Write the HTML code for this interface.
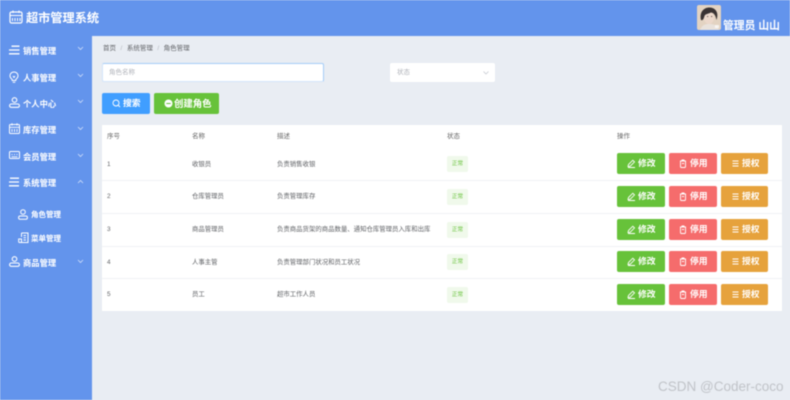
<!DOCTYPE html>
<html lang="zh-CN">
<head>
<meta charset="utf-8">
<title>超市管理系统</title>
<style>
*{box-sizing:border-box}
html,body{margin:0;padding:0}
body{width:790px;height:400px;overflow:hidden;position:relative;background:#e9edf3;font-family:"Liberation Sans","Noto Sans CJK SC",sans-serif;}
#wrap{position:absolute;left:0;top:0;width:790px;height:400px;overflow:hidden;filter:blur(.4px)}
.a{position:absolute;white-space:nowrap}
#hd{left:0;top:0;width:790px;height:36px;background:#6394ec}
#sd{left:0;top:36px;width:92px;height:364px;background:#6394ec}
.m{color:#fff;font-size:8.3px;font-weight:bold;line-height:12px}
.sub{font-size:7.5px}
.sv{position:absolute;fill:none;stroke:#fff;stroke-width:1.2}
.c{stroke-width:.8;opacity:.7}
.t{color:#606266;font-size:6.4px;line-height:10px}
.h{font-size:6.5px;color:#666}
.b{position:absolute;height:21px;border-radius:2px;color:#fff;font-size:8.8px;font-weight:bold;line-height:21px}
.b span{position:absolute;top:0}
.b svg{position:absolute;fill:none;stroke:#fff;stroke-width:.9}
.g{background:#67c23a}.r{background:#f56c6c}.o{background:#e6a23c}
.tag{position:absolute;left:447px;width:21px;height:16px;background:#f0f9eb;border-radius:2px;color:#67c23a;font-size:5.6px;line-height:16px;text-align:center}
.ln{position:absolute;left:102px;width:680px;height:1px;background:#f0f2f5}
</style>
</head>
<body>
<div id="wrap">
<div class="a" id="hd"></div>
<div class="a" id="sd"></div>

<svg class="sv" style="left:9px;top:10px" width="14" height="14" viewBox="0 0 14 14"><rect x="1" y="2" width="12" height="11" rx="1.5"/><path d="M1 5.500H13M4 .5V3M10 .5V3M3.500 8V11M6 8V11M8.500 8V11M11 8V11" stroke-width="1"/></svg>
<div class="a" style="left:26px;top:10px;color:#fff;font-size:12.2px;font-weight:bold;line-height:16px">超市管理系统</div>

<!-- avatar -->
<svg class="a" style="left:697px;top:5px;border-radius:2px" width="24" height="25" viewBox="0 0 24 25">
<rect width="24" height="25" fill="#e3d3c2"/>
<path d="M3 25C5 20 8 19 12 19C17 19 20 20 22 25Z" fill="#e9e2dc"/>
<ellipse cx="12" cy="13" rx="5" ry="6" fill="#ecd8cb"/>
<path d="M4 15C2 6 8 2 13 2.500C19 3 22 8 19.500 15C18.500 10 17 8 14 7.500C11 9 8 9 7.500 11C7 13 6 16 4 15Z" fill="#3a3333"/>
<path d="M10 11.500h1.200M14 11.500h1.200" stroke="#433" stroke-width=".8"/>
<rect x="18" y="20" width="4" height="3" fill="#fff" opacity=".7"/>
</svg>
<div class="a" style="left:723px;top:20px;color:#fff;font-size:10.800px;font-weight:bold;line-height:13px">管理员 山山</div>

<!-- sidebar -->
<svg class="sv" style="left:9px;top:45px" width="11" height="10" viewBox="0 0 11 10"><path d="M2.500 1.200H10.500M0 5H10.500M0 8.800H10.500" stroke-width="1.300"/></svg>
<div class="a m" style="left:23px;top:45px">销售管理</div>
<svg class="sv c" style="left:77px;top:46px" width="7" height="5" viewBox="0 0 7 5"><path d="M1 1L3.500 3.500L6 1"/></svg>

<svg class="sv" style="left:9px;top:71px;stroke-width:1" width="10" height="12" viewBox="0 0 10 12"><path d="M3.200 8.500C2 7.500 1 6.500 1 4.800C1 2.500 2.800 1 5 1C7.200 1 9 2.500 9 4.800C9 6.500 8 7.500 6.800 8.500V9.500H3.200ZM3.700 11.300H6.300M4 5L5 6.500L6 5"/></svg>
<div class="a m" style="left:23px;top:72px">人事管理</div>
<svg class="sv c" style="left:77px;top:73px" width="7" height="5" viewBox="0 0 7 5"><path d="M1 1L3.500 3.500L6 1"/></svg>

<svg class="sv" style="left:9px;top:97px;stroke-width:1.100" width="11" height="11" viewBox="0 0 11 11"><circle cx="5.500" cy="3" r="2.300"/><rect x=".6" y="7" width="9.800" height="3.300" rx="1.600"/></svg>
<div class="a m" style="left:23px;top:98px">个人中心</div>
<svg class="sv c" style="left:77px;top:99px" width="7" height="5" viewBox="0 0 7 5"><path d="M1 1L3.500 3.500L6 1"/></svg>

<svg class="sv" style="left:9px;top:123px;stroke-width:1" width="11" height="11" viewBox="0 0 11 11"><rect x=".5" y="1.500" width="10" height="9" rx="1"/><path d="M.5 4.300H10.500M3 .3V2.500M8 .3V2.500M3 6V9M5.500 6V9M8 6V9" stroke-width=".9"/></svg>
<div class="a m" style="left:23px;top:124px">库存管理</div>
<svg class="sv c" style="left:77px;top:126px" width="7" height="5" viewBox="0 0 7 5"><path d="M1 1L3.500 3.500L6 1"/></svg>

<svg class="sv" style="left:9px;top:151px;stroke-width:1" width="11" height="9" viewBox="0 0 11 9"><rect x=".5" y=".5" width="10" height="7" rx="1"/><path d="M2.500 3.500H3.500M5 3.500H6M7.500 3.500H8.500M2.500 5.800H8.500" stroke-width=".9"/></svg>
<div class="a m" style="left:23px;top:151px">会员管理</div>
<svg class="sv c" style="left:77px;top:153px" width="7" height="5" viewBox="0 0 7 5"><path d="M1 1L3.500 3.500L6 1"/></svg>

<svg class="sv" style="left:9px;top:177px" width="11" height="10" viewBox="0 0 11 10"><path d="M1 1.200H10M0 5H10M0 8.800H10" stroke-width="1.300"/></svg>
<div class="a m" style="left:23px;top:177px">系统管理</div>
<svg class="sv c" style="left:77px;top:179px" width="7" height="5" viewBox="0 0 7 5"><path d="M1 4L3.500 1.500L6 4"/></svg>

<svg class="sv" style="left:18px;top:209px;stroke-width:1" width="10" height="11" viewBox="0 0 10 11"><circle cx="5" cy="3" r="2.300"/><rect x=".6" y="7" width="8.800" height="3.200" rx="1.500"/></svg>
<div class="a m sub" style="left:31px;top:209px">角色管理</div>

<svg class="sv" style="left:18px;top:232px;stroke-width:1" width="11" height="12" viewBox="0 0 11 12"><path d="M3.500 1H10V10.500H2.500M3.500 1V5M5.500 3.500H8M5.500 5.800H8M5.500 8H8M.7 7H3.500V10.500H1.500C1 10.500 .7 10.200 .7 9.500Z"/></svg>
<div class="a m sub" style="left:31px;top:233px">菜单管理</div>

<svg class="sv" style="left:9px;top:256px;stroke-width:1.100" width="11" height="11" viewBox="0 0 11 11"><circle cx="5.500" cy="3" r="2.300"/><rect x=".6" y="7" width="9.800" height="3.300" rx="1.600"/></svg>
<div class="a m" style="left:23px;top:257px">商品管理</div>
<svg class="sv c" style="left:77px;top:259px" width="7" height="5" viewBox="0 0 7 5"><path d="M1 1L3.500 3.500L6 1"/></svg>

<!-- breadcrumb -->
<div class="a" style="left:103px;top:44px;font-size:6.500px;line-height:10px;color:#606266">首页<span style="color:#b5b9c0;margin:0 4.500px">/</span>系统管理<span style="color:#b5b9c0;margin:0 4.500px">/</span>角色管理</div>

<!-- form -->
<div class="a" style="left:102px;top:63px;width:222px;height:19px;background:#fff;border:1px solid #a5cdf8;border-left-color:#d3e5fa;border-bottom-color:#d3e5fa;border-radius:2px"></div>
<div class="a" style="left:109px;top:68px;font-size:6.500px;line-height:10px;color:#b0b3ba">角色名称</div>
<div class="a" style="left:390px;top:63px;width:105px;height:19px;background:#fff;border-radius:2px"></div>
<div class="a" style="left:397px;top:68px;font-size:6.500px;line-height:10px;color:#b0b3ba">状态</div>
<svg class="a" style="left:483px;top:71px;fill:none;stroke:#c0c4cc;stroke-width:.7" width="6" height="4" viewBox="0 0 6 4"><path d="M.5 .5L3 3L5.500 .5"/></svg>

<div class="b" style="left:102px;top:93px;width:48px;background:#409eff"><svg style="left:10px;top:6px" width="9" height="9" viewBox="0 0 9 9"><circle cx="4" cy="4" r="3"/><path d="M6.300 6.300L8 8"/></svg><span style="left:21px">搜索</span></div>
<div class="b g" style="left:154px;top:93px;width:65px"><svg style="left:10px;top:6px;fill:#fff;stroke:none" width="9" height="9" viewBox="0 0 9 9"><circle cx="4.500" cy="4.500" r="4"/><rect x="2.300" y="4" width="4.400" height="1" fill="#67c23a"/></svg><span style="left:20px;font-size:9.400px">创建角色</span></div>

<!-- table -->
<div class="a" style="left:102px;top:125px;width:680px;height:186px;background:#fff"></div>
<div class="ln" style="top:180px"></div>
<div class="ln" style="top:213px"></div>
<div class="ln" style="top:246px"></div>
<div class="ln" style="top:278px"></div>

<div class="a t h" style="left:107px;top:132px">序号</div>
<div class="a t h" style="left:192px;top:132px">名称</div>
<div class="a t h" style="left:277px;top:132px">描述</div>
<div class="a t h" style="left:447px;top:132px">状态</div>
<div class="a t h" style="left:617px;top:132px">操作</div>

<div class="a t" style="left:107px;top:160px">1</div><div class="a t" style="left:192px;top:160px">收银员</div><div class="a t" style="left:277px;top:160px">负责销售收银</div><div class="tag" style="top:156px">正常</div>
<div class="a t" style="left:107px;top:192px">2</div><div class="a t" style="left:192px;top:192px">仓库管理员</div><div class="a t" style="left:277px;top:192px">负责管理库存</div><div class="tag" style="top:189px">正常</div>
<div class="a t" style="left:107px;top:225px">3</div><div class="a t" style="left:192px;top:225px">商品管理员</div><div class="a t" style="left:277px;top:225px">负责商品货架的商品数量、通知仓库管理员入库和出库</div><div class="tag" style="top:222px">正常</div>
<div class="a t" style="left:107px;top:258px">4</div><div class="a t" style="left:192px;top:258px">人事主管</div><div class="a t" style="left:277px;top:258px">负责管理部门状况和员工状况</div><div class="tag" style="top:254px">正常</div>
<div class="a t" style="left:107px;top:290px">5</div><div class="a t" style="left:192px;top:290px">员工</div><div class="a t" style="left:277px;top:290px">超市工作人员</div><div class="tag" style="top:287px">正常</div>

<!-- action buttons -->
<div class="b g" style="left:617px;top:153px;width:48px"><svg style="left:10px;top:6px" width="9" height="9" viewBox="0 0 9 9"><path d="M1 7.500L1.500 5.500L5.800 1.200L7.500 2.900L3.200 7.200ZM1 8.500H8"/></svg><span style="left:21px">修改</span></div>
<div class="b r" style="left:669px;top:153px;width:48px"><svg style="left:10px;top:6px" width="8" height="9" viewBox="0 0 8 9"><path d="M1 2H7M3 2V1H5V2M1.500 2V7.500C1.500 8 2 8.500 2.500 8.500H5.500C6 8.500 6.500 8 6.500 7.500V2M3 4.500H5"/></svg><span style="left:21px">停用</span></div>
<div class="b o" style="left:721px;top:153px;width:47px"><svg style="left:11px;top:7px" width="7" height="7" viewBox="0 0 7 7"><path d="M.5 1H6.500M.5 3.500H6.500M.5 6H6.500"/></svg><span style="left:21px">授权</span></div>

<div class="b g" style="left:617px;top:186px;width:48px"><svg style="left:10px;top:6px" width="9" height="9" viewBox="0 0 9 9"><path d="M1 7.500L1.500 5.500L5.800 1.200L7.500 2.900L3.200 7.200ZM1 8.500H8"/></svg><span style="left:21px">修改</span></div>
<div class="b r" style="left:669px;top:186px;width:48px"><svg style="left:10px;top:6px" width="8" height="9" viewBox="0 0 8 9"><path d="M1 2H7M3 2V1H5V2M1.500 2V7.500C1.500 8 2 8.500 2.500 8.500H5.500C6 8.500 6.500 8 6.500 7.500V2M3 4.500H5"/></svg><span style="left:21px">停用</span></div>
<div class="b o" style="left:721px;top:186px;width:47px"><svg style="left:11px;top:7px" width="7" height="7" viewBox="0 0 7 7"><path d="M.5 1H6.500M.5 3.500H6.500M.5 6H6.500"/></svg><span style="left:21px">授权</span></div>

<div class="b g" style="left:617px;top:219px;width:48px"><svg style="left:10px;top:6px" width="9" height="9" viewBox="0 0 9 9"><path d="M1 7.500L1.500 5.500L5.800 1.200L7.500 2.900L3.200 7.200ZM1 8.500H8"/></svg><span style="left:21px">修改</span></div>
<div class="b r" style="left:669px;top:219px;width:48px"><svg style="left:10px;top:6px" width="8" height="9" viewBox="0 0 8 9"><path d="M1 2H7M3 2V1H5V2M1.500 2V7.500C1.500 8 2 8.500 2.500 8.500H5.500C6 8.500 6.500 8 6.500 7.500V2M3 4.500H5"/></svg><span style="left:21px">停用</span></div>
<div class="b o" style="left:721px;top:219px;width:47px"><svg style="left:11px;top:7px" width="7" height="7" viewBox="0 0 7 7"><path d="M.5 1H6.500M.5 3.500H6.500M.5 6H6.500"/></svg><span style="left:21px">授权</span></div>

<div class="b g" style="left:617px;top:251px;width:48px"><svg style="left:10px;top:6px" width="9" height="9" viewBox="0 0 9 9"><path d="M1 7.500L1.500 5.500L5.800 1.200L7.500 2.900L3.200 7.200ZM1 8.500H8"/></svg><span style="left:21px">修改</span></div>
<div class="b r" style="left:669px;top:251px;width:48px"><svg style="left:10px;top:6px" width="8" height="9" viewBox="0 0 8 9"><path d="M1 2H7M3 2V1H5V2M1.500 2V7.500C1.500 8 2 8.500 2.500 8.500H5.500C6 8.500 6.500 8 6.500 7.500V2M3 4.500H5"/></svg><span style="left:21px">停用</span></div>
<div class="b o" style="left:721px;top:251px;width:47px"><svg style="left:11px;top:7px" width="7" height="7" viewBox="0 0 7 7"><path d="M.5 1H6.500M.5 3.500H6.500M.5 6H6.500"/></svg><span style="left:21px">授权</span></div>

<div class="b g" style="left:617px;top:284px;width:48px"><svg style="left:10px;top:6px" width="9" height="9" viewBox="0 0 9 9"><path d="M1 7.500L1.500 5.500L5.800 1.200L7.500 2.900L3.200 7.200ZM1 8.500H8"/></svg><span style="left:21px">修改</span></div>
<div class="b r" style="left:669px;top:284px;width:48px"><svg style="left:10px;top:6px" width="8" height="9" viewBox="0 0 8 9"><path d="M1 2H7M3 2V1H5V2M1.500 2V7.500C1.500 8 2 8.500 2.500 8.500H5.500C6 8.500 6.500 8 6.500 7.500V2M3 4.500H5"/></svg><span style="left:21px">停用</span></div>
<div class="b o" style="left:721px;top:284px;width:47px"><svg style="left:11px;top:7px" width="7" height="7" viewBox="0 0 7 7"><path d="M.5 1H6.500M.5 3.500H6.500M.5 6H6.500"/></svg><span style="left:21px">授权</span></div>

<!-- watermark -->
<div class="a" style="left:658px;top:379px;font-size:13.500px;line-height:16px;color:#c0c3c8">CSDN @Coder-coco</div>
</div>
</body>
</html>
